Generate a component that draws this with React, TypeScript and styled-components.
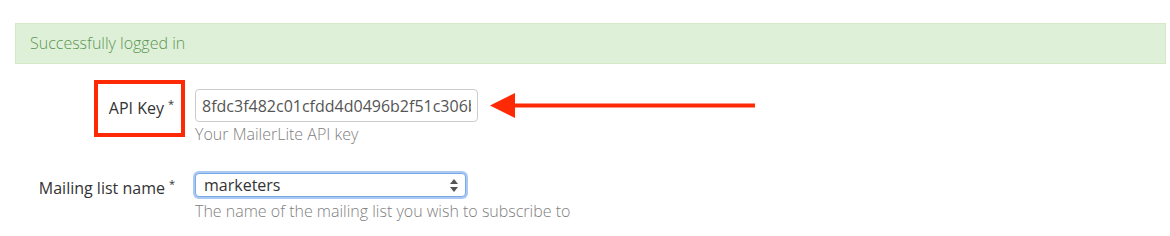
import React from "react";
import styled, { createGlobalStyle } from "styled-components";

const GlobalStyle = createGlobalStyle`
  html, body {
    margin: 0;
    padding: 0;
    background: #ffffff;
  }
  body {
    font-family: "Open Sans", "Liberation Sans", Arial, sans-serif;
    font-size: 16px;
    color: #333333;
  }
`;

const Page = styled.div`
  width: 1151px;
  padding: 23px 4px 0 15px;
`;

const Alert = styled.div`
  box-sizing: border-box;
  height: 41px;
  padding: 0 14px;
  background-color: #dff0d8;
  border: 1px solid #d6e9c6;
  color: #5c9656;
  font-weight: 300;
  font-size: 16px;
  line-height: 39px;
`;

const Row = styled.div<{ top: number }>`
  display: flex;
  align-items: flex-start;
  margin-top: ${(p) => p.top}px;
`;

const LabelCol = styled.div<{ offset: number }>`
  width: 170px;
  display: flex;
  justify-content: flex-end;
  padding-top: ${(p) => p.offset}px;
  flex-shrink: 0;
`;

const Label = styled.label<{ marked?: boolean }>`
  box-sizing: border-box;
  display: flex;
  align-items: center;
  line-height: 22px;
  font-size: 16px;
  color: #333333;
  white-space: nowrap;
  ${(p) =>
    p.marked
      ? `
    height: 57px;
    border: 4px solid #fe2a05;
    padding: 0 7px 2px 11px;
  `
      : `
    padding: 0 10px 0 0;
  `}
`;

const Req = styled.sup`
  font-size: 11px;
  margin-left: 4px;
  position: relative;
  top: -4px;
`;

const Control = styled.div<{ offset: number }>`
  display: flex;
  flex-direction: column;
  margin-left: 10px;
  padding-top: ${(p) => p.offset}px;
`;

const InputLine = styled.div`
  display: flex;
  align-items: center;
`;

const TextInput = styled.input`
  box-sizing: border-box;
  width: 283px;
  height: 33px;
  padding: 0 6px;
  border: 1px solid #cccccc;
  border-radius: 4px;
  font-family: "Open Sans", "Liberation Sans", Arial, sans-serif;
  font-size: 16px;
  color: #555555;
  outline: none;
`;

const SelectBox = styled.div`
  box-sizing: border-box;
  width: 271px;
  height: 24px;
  display: flex;
  align-items: center;
  justify-content: space-between;
  padding: 0 7px 0 8px;
  border: 1px solid #7aa7e6;
  border-radius: 4px;
  box-shadow: 0 0 0 2px #a9c8f3;
  background: #ffffff;
  font-size: 16px;
  color: #333333;
  margin-top: 1px;
`;

const Help = styled.div<{ gap: number }>`
  margin-top: ${(p) => p.gap}px;
  line-height: 22px;
  font-size: 16px;
  font-weight: 300;
  color: #808080;
  white-space: nowrap;
`;

const Arrow = () => (
  <svg width="266" height="26" viewBox="0 0 266 26" style={{ marginLeft: 12 }}>
    <polygon points="0,12.5 25,0 25,25" fill="#fe2a05" />
    <rect x="24" y="10.5" width="241" height="4" fill="#fe2a05" />
  </svg>
);

const Spinner = () => (
  <svg width="8" height="13" viewBox="0 0 8 13">
    <polygon points="4,0 8,5 0,5" fill="#555555" />
    <polygon points="4,13 8,8 0,8" fill="#555555" />
  </svg>
);

export default function App() {
  return (
    <>
      <GlobalStyle />
      <Page>
        <Alert>Successfully logged in</Alert>

        <Row top={16}>
          <LabelCol offset={0}>
            <Label marked>
              API Key<Req>*</Req>
            </Label>
          </LabelCol>
          <Control offset={9}>
            <InputLine>
              <TextInput readOnly value="8fdc3f482c01cfdd4d0496b2f51c306b9e17a4c2" />
              <Arrow />
            </InputLine>
            <Help gap={1}>Your MailerLite API key</Help>
          </Control>
        </Row>

        <Row top={-10}>
          <LabelCol offset={42}>
            <Label>
              Mailing list name<Req>*</Req>
            </Label>
          </LabelCol>
          <Control offset={37}>
            <SelectBox>
              <span>marketers</span>
              <Spinner />
            </SelectBox>
            <Help gap={3}>The name of the mailing list you wish to subscribe to</Help>
          </Control>
        </Row>
      </Page>
    </>
  );
}
